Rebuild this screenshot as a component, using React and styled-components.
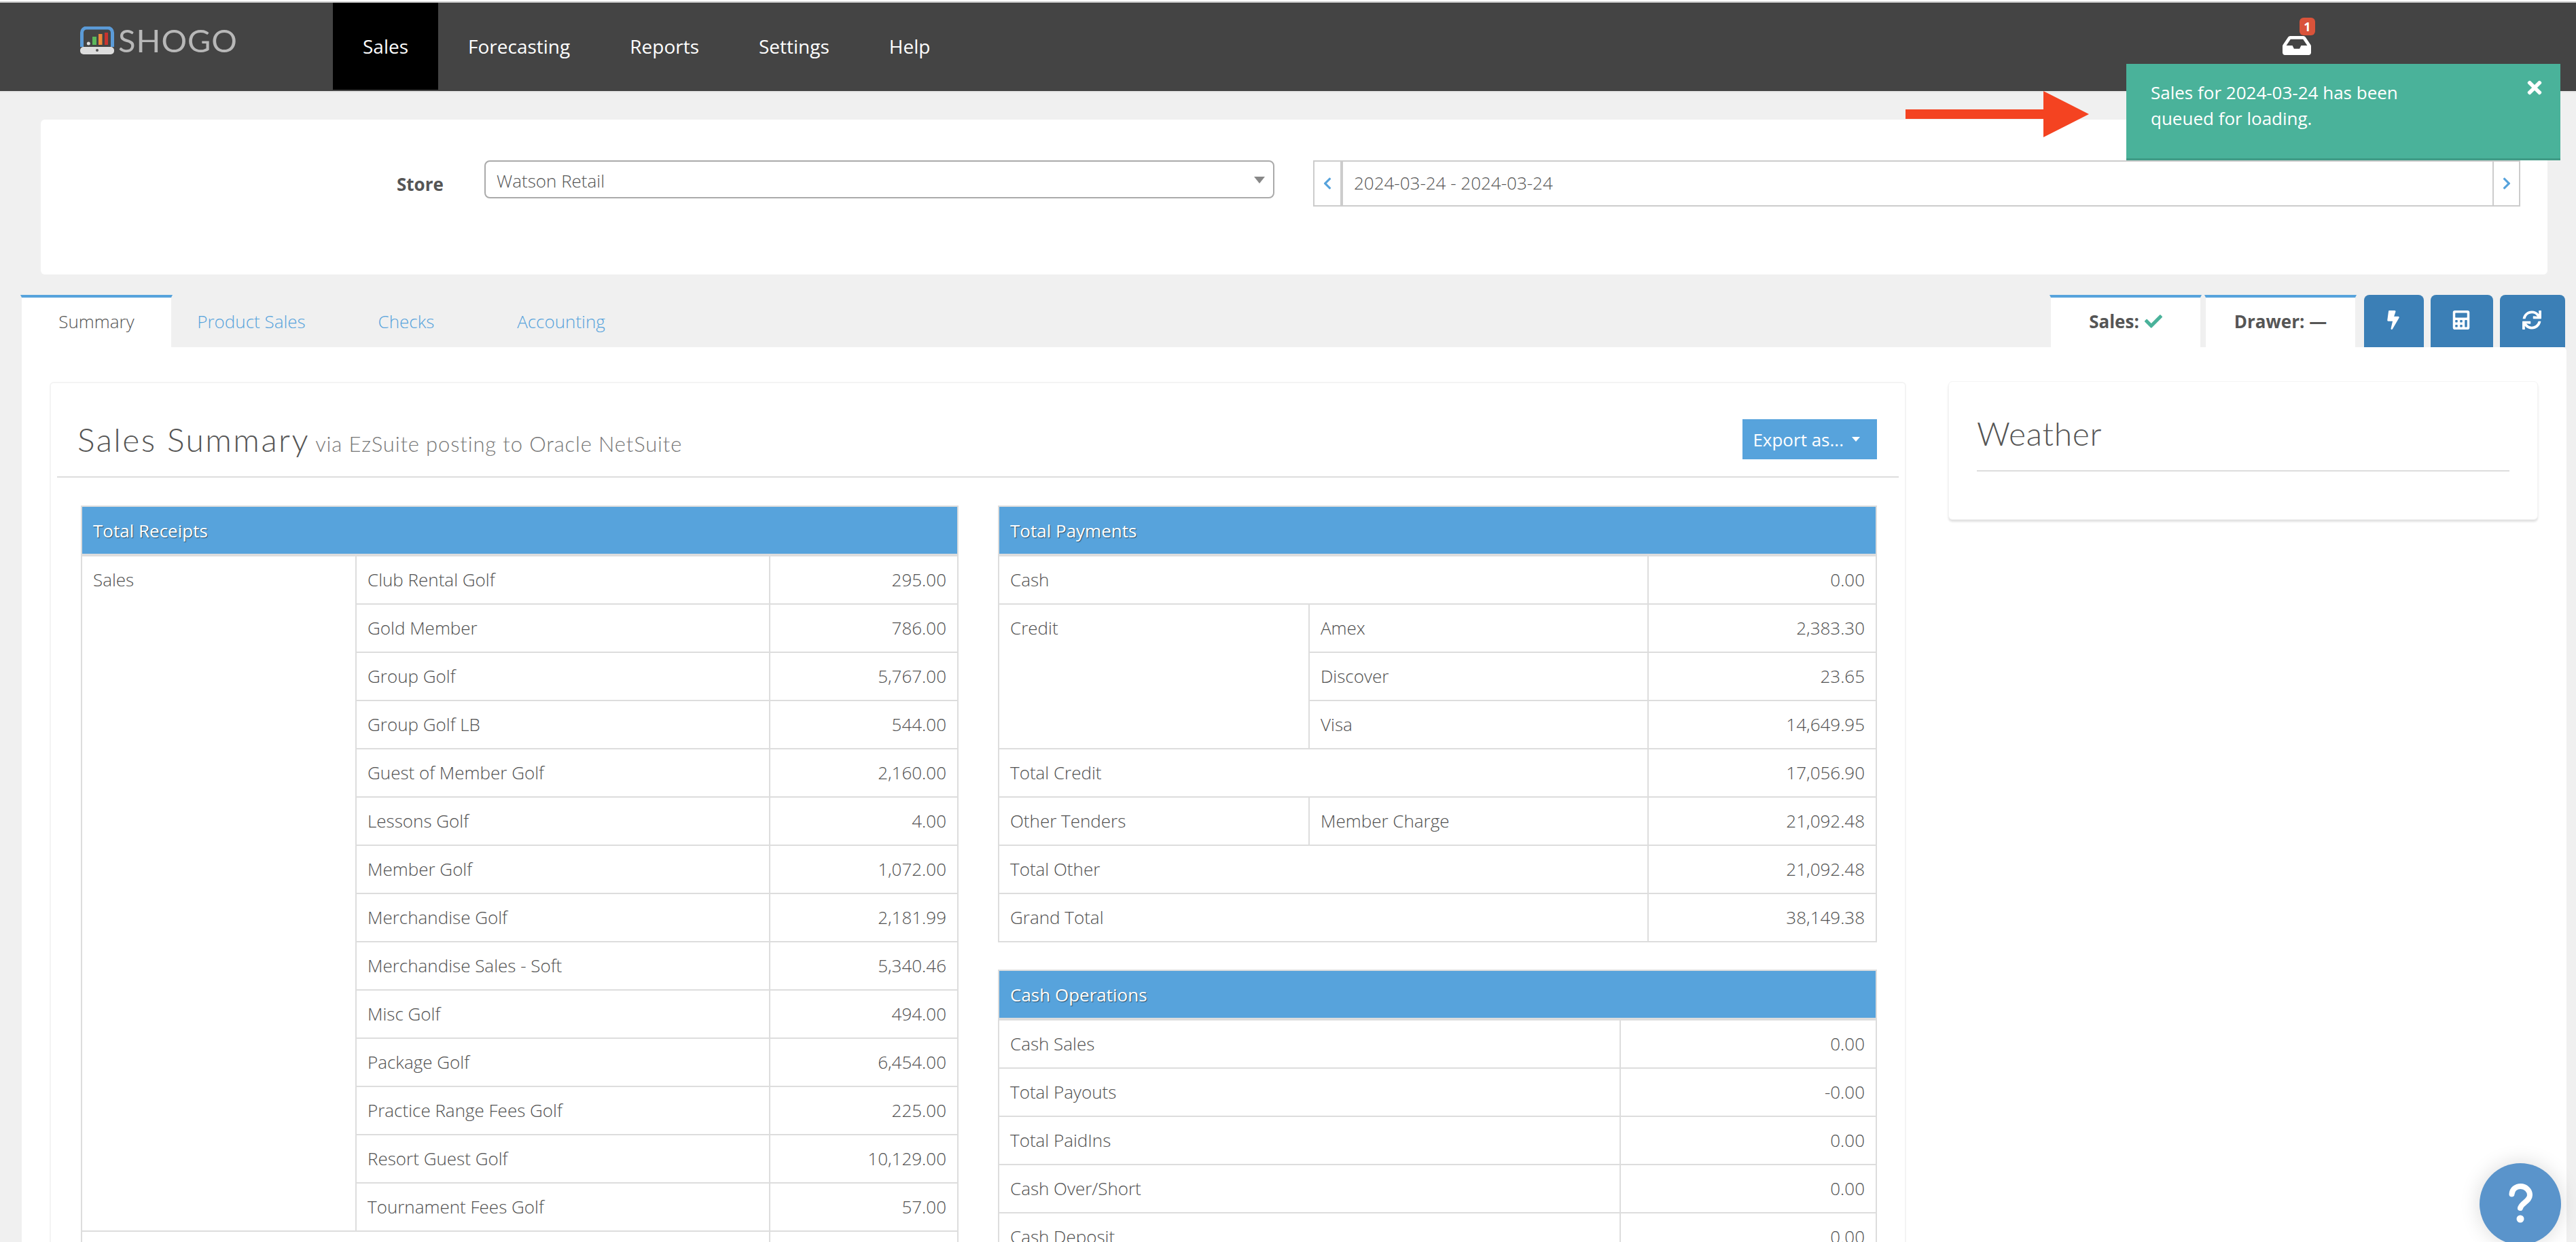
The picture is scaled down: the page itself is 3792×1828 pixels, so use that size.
import React from 'react';
import styled, { createGlobalStyle } from 'styled-components';
import { FaInbox, FaBolt, FaCalculator, FaSync, FaCheck, FaTimes, FaChevronLeft, FaChevronRight } from 'react-icons/fa';

const GlobalStyle = createGlobalStyle`
	html, body {
		margin: 0;
		padding: 0;
		width: 3792px;
		height: 1828px;
		overflow: hidden;
		background: #fff;
	}
	body {
		font-family: 'Open Sans', 'Liberation Sans', sans-serif;
		font-size: 26px;
		color: #555;
	}
	* {
		box-sizing: border-box;
	}
`;

const salesRows = [
	['Club Rental Golf', '295.00'],
	['Gold Member', '786.00'],
	['Group Golf', '5,767.00'],
	['Group Golf LB', '544.00'],
	['Guest of Member Golf', '2,160.00'],
	['Lessons Golf', '4.00'],
	['Member Golf', '1,072.00'],
	['Merchandise Golf', '2,181.99'],
	['Merchandise Sales - Soft', '5,340.46'],
	['Misc Golf', '494.00'],
	['Package Golf', '6,454.00'],
	['Practice Range Fees Golf', '225.00'],
	['Resort Guest Golf', '10,129.00'],
	['Tournament Fees Golf', '57.00'],
];

const cashRows = [
	['Cash Sales', '0.00'],
	['Total Payouts', '-0.00'],
	['Total PaidIns', '0.00'],
	['Cash Over/Short', '0.00'],
	['Cash Deposit', '0.00'],
];

function App() {
	return (
		<Page>
			<GlobalStyle />
			<TopBar>
				<Logo>
					<svg width="50" height="41" viewBox="0 0 50 41">
						<path d="M2.5 30V9a7 7 0 0 1 7-7h31a7 7 0 0 1 7 7v21" fill="none" stroke="#5b9bd8" strokeWidth="5" />
						<circle cx="12.3" cy="25" r="2.5" fill="#ddd" />
						<rect x="18" y="15" width="6" height="12" fill="#5cb85c" />
						<rect x="27" y="11" width="5.5" height="16" fill="#f0883a" />
						<rect x="36" y="9" width="5" height="18" fill="#c9342f" />
						<rect x="0" y="30" width="50" height="11" rx="5" fill="#ddd" />
						<circle cx="25" cy="35" r="2" fill="#555" />
					</svg>
					<LogoText>SHOGO</LogoText>
				</Logo>
				<NavItem $active>Sales</NavItem>
				<NavItem>Forecasting</NavItem>
				<NavItem>Reports</NavItem>
				<NavItem>Settings</NavItem>
				<NavItem>Help</NavItem>
				<Inbox>
					<FaInbox size={42} color="#fff" />
					<Badge>1</Badge>
				</Inbox>
			</TopBar>

			<StorePanel>
				<StoreLabel>Store</StoreLabel>
				<StoreSelect>
					Watson Retail
					<SelectCaret />
				</StoreSelect>
				<DateRange>
					<DateStep $side="left"><FaChevronLeft size={20} /></DateStep>
					<DateText>2024-03-24 - 2024-03-24</DateText>
					<DateStep $side="right"><FaChevronRight size={20} /></DateStep>
				</DateRange>
			</StorePanel>

			<TabRow>
				<Tab $active>Summary</Tab>
				<Tab>Product Sales</Tab>
				<Tab>Checks</Tab>
				<Tab>Accounting</Tab>
				<StatusGroup>
					<StatusTab>Sales: <FaCheck size={26} color="#4ab29a" /></StatusTab>
					<StatusTab>Drawer: —</StatusTab>
					<IconButton $width={88}><FaBolt size={28} /></IconButton>
					<IconButton $width={92}><FaCalculator size={28} /></IconButton>
					<IconButton $width={96}><FaSync size={28} /></IconButton>
				</StatusGroup>
			</TabRow>

			<MainPanel>
				<SummaryCard>
					<CardHeader>
						<Title>Sales Summary <small>via EzSuite posting to Oracle NetSuite</small></Title>
						<ExportButton>Export as... <ButtonCaret /></ExportButton>
					</CardHeader>
					<Tables>
						<Table $width={1290}>
							<colgroup>
								<col width="404" />
								<col width="609" />
								<col width="277" />
							</colgroup>
							<thead>
								<tr><HeadCell colSpan={3}>Total Receipts</HeadCell></tr>
							</thead>
							<tbody>
								{salesRows.map((row, i) => (
									<tr key={row[0]}>
										{i === 0 && <Cell rowSpan={salesRows.length}>Sales</Cell>}
										<Cell>{row[0]}</Cell>
										<Amount>{row[1]}</Amount>
									</tr>
								))}
								<tr>
									<Cell colSpan={2}>&nbsp;</Cell>
									<Amount>&nbsp;</Amount>
								</tr>
							</tbody>
						</Table>
						<SideTables>
							<Table $width={1292}>
								<colgroup>
									<col width="457" />
									<col width="499" />
									<col width="336" />
								</colgroup>
								<thead>
									<tr><HeadCell colSpan={3}>Total Payments</HeadCell></tr>
								</thead>
								<tbody>
									<tr><Cell colSpan={2}>Cash</Cell><Amount>0.00</Amount></tr>
									<tr><Cell rowSpan={3}>Credit</Cell><Cell>Amex</Cell><Amount>2,383.30</Amount></tr>
									<tr><Cell>Discover</Cell><Amount>23.65</Amount></tr>
									<tr><Cell>Visa</Cell><Amount>14,649.95</Amount></tr>
									<tr><Cell colSpan={2}>Total Credit</Cell><Amount>17,056.90</Amount></tr>
									<tr><Cell>Other Tenders</Cell><Cell>Member Charge</Cell><Amount>21,092.48</Amount></tr>
									<tr><Cell colSpan={2}>Total Other</Cell><Amount>21,092.48</Amount></tr>
									<tr><Cell colSpan={2}>Grand Total</Cell><Amount>38,149.38</Amount></tr>
								</tbody>
							</Table>
							<Table $width={1292}>
								<colgroup>
									<col width="915" />
									<col width="377" />
								</colgroup>
								<thead>
									<tr><HeadCell colSpan={2}>Cash Operations</HeadCell></tr>
								</thead>
								<tbody>
									{cashRows.map(row => (
										<tr key={row[0]}>
											<Cell>{row[0]}</Cell>
											<Amount>{row[1]}</Amount>
										</tr>
									))}
								</tbody>
							</Table>
						</SideTables>
					</Tables>
				</SummaryCard>
				<WeatherCard>
					<WeatherTitle>Weather</WeatherTitle>
				</WeatherCard>
			</MainPanel>

			<PointerArrow width="270" height="68" viewBox="0 0 270 68">
				<path d="M0 27H203V0L270 34L203 68V41H0Z" fill="#f44321" />
			</PointerArrow>

			<Toast>
				Sales for 2024-03-24 has been<br />queued for loading.
				<ToastClose><FaTimes size={30} /></ToastClose>
			</Toast>

			<HelpButton>
				<svg width="120" height="120" viewBox="0 0 120 120">
					<path d="M47.5 45.5C48 38 54 34 60.5 34C68 34 74 40 74 47C74 56 62 58 60 66" fill="none" stroke="#fff" strokeWidth="8" strokeLinecap="round" />
					<circle cx="60" cy="82" r="5.5" fill="#fff" />
				</svg>
			</HelpButton>
		</Page>
	);
}

const Page = styled.div`
	position: relative;
	width: 3792px;
	height: 1828px;
	margin-top: 2px;
	background: #f0f0f0;
	overflow: hidden;
`;

const TopBar = styled.header`
	display: flex;
	align-items: flex-start;
	height: 134px;
	background: #444;
	border-top: 2px solid #ccc;
	border-bottom: 2px solid #e6e6e6;
`;

const Logo = styled.div`
	display: flex;
	align-items: center;
	gap: 6px;
	width: 490px;
	height: 128px;
	padding: 0 0 18px 118px;
	filter: blur(.5px);
`;

const LogoText = styled.span`
	font-family: 'Lato', sans-serif;
	font-size: 47px;
	font-weight: 400;
	letter-spacing: 1px;
	line-height: 1;
	color: #b8b8b8;
`;

const NavItem = styled.div`
	height: 128px;
	padding: 0 44px;
	display: flex;
	align-items: center;
	font-size: 28px;
	color: #fff;
	background: ${p => (p.$active ? '#000' : 'transparent')};
`;

const Inbox = styled.div`
	position: relative;
	margin-left: auto;
	margin-right: 390px;
	margin-top: 42px;
	line-height: 0;
`;

const Badge = styled.span`
	position: absolute;
	left: 25px;
	top: -20px;
	width: 23px;
	height: 26px;
	border-radius: 6px;
	background: #d9533a;
	color: #fff;
	font-size: 18px;
	font-weight: 700;
	line-height: 26px;
	text-align: center;
`;

const StorePanel = styled.section`
	display: flex;
	align-items: flex-start;
	height: 228px;
	margin: 40px 42px 0 60px;
	padding: 60px 0 0 524px;
	background: #fff;
	border-radius: 6px;
`;

const StoreLabel = styled.label`
	margin-top: 17px;
	width: 66px;
	font-weight: 700;
	line-height: 36px;
`;

const StoreSelect = styled.div`
	position: relative;
	width: 1163px;
	height: 56px;
	margin-left: 63px;
	padding-left: 16px;
	border: 2px solid #aaa;
	border-radius: 8px;
	font-weight: 300;
	line-height: 56px;
`;

const SelectCaret = styled.span`
	position: absolute;
	right: 12px;
	top: 22px;
	border-left: 8px solid transparent;
	border-right: 8px solid transparent;
	border-top: 10px solid #888;
`;

const DateRange = styled.div`
	display: flex;
	width: 1777px;
	height: 68px;
	margin-left: 57px;
	border: 2px solid #ccc;
`;

const DateStep = styled.div`
	display: flex;
	align-items: center;
	justify-content: center;
	width: ${p => (p.$side === 'left' ? '42px' : '39px')};
	color: #57a3dc;
	${p => (p.$side === 'left' ? 'border-right: 4px solid #ccc;' : 'border-left: 2px solid #ccc;')}
`;

const DateText = styled.div`
	flex: 1;
	padding-left: 16px;
	font-weight: 300;
	line-height: 62px;
`;

const TabRow = styled.nav`
	display: flex;
	height: 77px;
	margin-top: 30px;
	padding: 0 16px 0 30px;
`;

const Tab = styled.div`
	display: flex;
	align-items: center;
	justify-content: center;
	width: 224px;
	margin-right: 4px;
	padding-bottom: 4px;
	font-weight: 300;
	color: ${p => (p.$active ? '#555' : '#57a3dc')};
	background: ${p => (p.$active ? '#fff' : 'transparent')};
	border-top: 4px solid ${p => (p.$active ? '#57a3dc' : 'transparent')};
	border-left: 2px solid #f0f0f0;
	border-right: 2px solid #f0f0f0;
`;

const StatusGroup = styled.div`
	display: flex;
	margin-left: auto;
`;

const StatusTab = styled(Tab).attrs({ $active: true })`
	gap: 8px;
	font-weight: 700;
	&:nth-child(2) {
		margin-right: 11px;
	}
`;

const IconButton = styled.div`
	display: flex;
	align-items: center;
	justify-content: center;
	width: ${p => p.$width}px;
	margin-left: 10px;
	padding: 0 3px 4px 0;
	background: #3b7fb6;
	color: #fff;
	border-radius: 8px 8px 0 0;
	&:nth-child(3) {
		margin-left: 0;
	}
`;

const MainPanel = styled.main`
	display: flex;
	align-items: flex-start;
	gap: 62px;
	width: 3746px;
	height: 1400px;
	margin-left: 32px;
	padding: 51px 0 0 41px;
	background: #fff;
	border-radius: 0 6px 0 0;
`;

const SummaryCard = styled.article`
	width: 2733px;
	height: 1300px;
	border: 2px solid #f4f4f4;
	border-bottom: 0;
	border-radius: 6px 6px 0 0;
`;

const CardHeader = styled.div`
	display: flex;
	align-items: flex-start;
	justify-content: space-between;
	height: 139px;
	margin: 0 9px;
	padding: 53px 32px 0 30px;
	border-bottom: 2px solid #ddd;
`;

const Title = styled.h1`
	margin: 0;
	font-family: 'Lato', sans-serif;
	font-size: 48px;
	font-weight: 300;
	letter-spacing: 2.4px;
	line-height: 60px;
	color: #555;
	small {
		font-size: 31px;
		letter-spacing: .85px;
		color: #777;
		margin-left: -6px;
	}
`;

const ExportButton = styled.div`
	display: flex;
	align-items: center;
	gap: 12px;
	height: 59px;
	padding: 0 25px 0 15px;
	background: #57a3dc;
	color: #fff;
`;

const ButtonCaret = styled.span`
	border-left: 6px solid transparent;
	border-right: 6px solid transparent;
	border-top: 7px solid #fff;
`;

const Tables = styled.div`
	display: flex;
	gap: 58px;
	padding: 41px 0 0 44px;
`;

const SideTables = styled.div`
	display: flex;
	flex-direction: column;
	gap: 40px;
`;

const Table = styled.table`
	table-layout: fixed;
	width: ${p => p.$width}px;
	border-collapse: collapse;
	flex: none;
`;

const HeadCell = styled.th`
	height: 72px;
	padding: 0 16px;
	background: #57a3dc;
	border: 2px solid #ddd;
	border-bottom-width: 4px;
	color: #fff;
	font-size: 26px;
	font-weight: 400;
	text-align: left;
	text-shadow: 1px 1px 1px rgba(0, 0, 0, .5);
`;

const Cell = styled.td`
	height: 71px;
	padding: 16px 16px;
	border: 2px solid #ddd;
	color: #505050;
	font-weight: 300;
	line-height: 37px;
	vertical-align: top;
	white-space: nowrap;
`;

const Amount = styled(Cell)`
	text-align: right;
`;

const WeatherCard = styled.aside`
	width: 868px;
	height: 204px;
	margin-top: -1px;
	padding: 46px 41px 0;
	background: #fff;
	border: 1px solid #f4f4f4;
	border-radius: 6px;
	box-shadow: 0 3px 3px rgba(0, 0, 0, .12);
`;

const WeatherTitle = styled.h2`
	margin: 0;
	height: 86px;
	border-bottom: 2px solid #ddd;
	font-family: 'Lato', sans-serif;
	font-size: 48px;
	font-weight: 300;
	letter-spacing: .7px;
	line-height: 60px;
	color: #555;
`;

const PointerArrow = styled.svg`
	position: absolute;
	left: 2805px;
	top: 132px;
`;

const Toast = styled.div`
	position: absolute;
	left: 3130px;
	top: 92px;
	width: 639px;
	height: 142px;
	padding: 23px 36px;
	background: #4ab29a;
	border-bottom: 3px solid #3f9a85;
	color: #fff;
	font-size: 26px;
	line-height: 38px;
`;

const ToastClose = styled.span`
	position: absolute;
	right: 23px;
	top: 20px;
	line-height: 0;
`;

const HelpButton = styled.div`
	position: absolute;
	left: 3650px;
	top: 1710px;
	width: 120px;
	height: 120px;
	border-radius: 50%;
	background: #5a94cb;
	box-shadow: 0 0 30px rgba(0, 0, 0, .15);
	line-height: 0;
`;

export default App;
